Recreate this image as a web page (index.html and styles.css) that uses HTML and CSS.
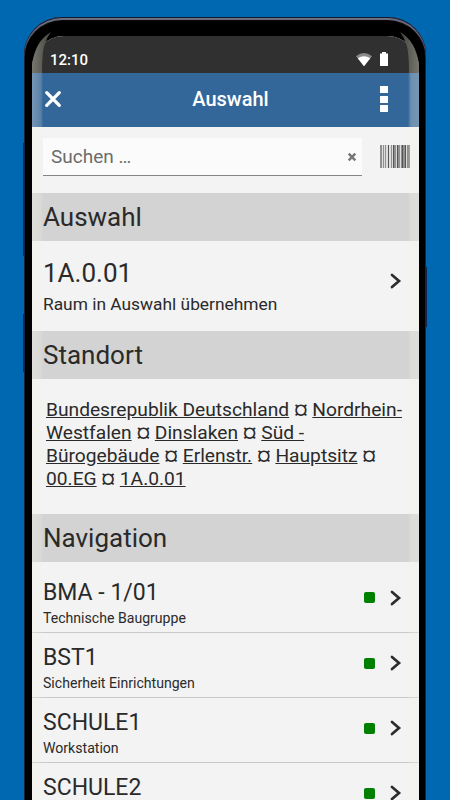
FILE: index.html
```
<!DOCTYPE html>
<html lang="de">
    <head>
        <meta charset="utf-8">
        <title>Auswahl</title>
        <link rel="stylesheet" href="styles.css">
    </head>
    <body>
        <div class="phone">
            <span class="button left upper"></span>
            <span class="button left lower"></span>
            <span class="button right"></span>
            <div class="screen">
                <div class="status">
                    <span class="time">12:10</span>
                    <svg class="wifi" width="18" height="15" viewBox="0 0 18 15">
                        <path d="M1 4.2Q9-2.2 17 4.2L9 14.2Z" fill="#8a8a8a"/>
                        <path d="M2.8 6.3Q9 2 15.2 6.3L9 14.2Z" fill="#fff"/>
                    </svg>
                    <svg class="battery" width="8" height="14" viewBox="0 0 8 14">
                        <path d="M2 0h4v1.5h2V14H0V1.5h2z" fill="#fff"/>
                    </svg>
                </div>
                <div class="header">
                    <svg class="close" width="18" height="18" viewBox="0 0 18 18">
                        <path d="M2.7 2.7L15.3 15.3M15.3 2.7L2.7 15.3" stroke="#fff" stroke-width="3.3" stroke-linecap="round"/>
                    </svg>
                    <h1>Auswahl</h1>
                    <div class="dots"><i></i><i></i><i></i></div>
                </div>
                <div class="search">
                    <div class="field">
                        <span>Suchen …</span>
                        <svg width="10" height="10" viewBox="0 0 10 10">
                            <path d="M1.7 1.7L8.3 8.3M8.3 1.7L1.7 8.3" stroke="#777" stroke-width="2.4"/>
                        </svg>
                    </div>
                    <svg class="barcode" width="30" height="23" viewBox="0 0 30 23">
                        <path d="M0 0h30v23H0z" fill="#ddd"/>
                        <path d="M0 0h2v23H0z M3 0h1v23H3z M5 0h1v23H5z M11 0h1v23h-1z M14 0h2v23h-2z M18 0h2v23h-2z M21 0h1v23h-1z M23 0h2v23h-2z M27 0h3v23h-3z" fill="#909090"/>
                        <path d="M8 0h1v23H8z M13 0h1v23h-1z M17 0h1v23h-1z M22 0h1v23h-1z M25 0h1v23h-1z" fill="#555"/>
                    </svg>
                </div>
                <h2>Auswahl</h2>
                <div class="row room">
                    <div class="label"><b>1A.0.01</b><small>Raum in Auswahl übernehmen</small></div>
                    <svg class="arrow" width="12" height="16" viewBox="0 0 12 16"><path d="M2 2L9 8L2 14"/></svg>
                </div>
                <h2>Standort</h2>
                <p class="path">
                    <a>Bundesrepublik Deutschland</a> ¤ <a>Nordrhein-<br>Westfalen</a> ¤ <a>Dinslaken</a> ¤ <a>Süd -<br>Bürogebäude</a> ¤ <a>Erlenstr.</a> ¤ <a>Hauptsitz</a> ¤<br><a>00.EG</a> ¤ <a>1A.0.01</a>
                </p>
                <h2>Navigation</h2>
                <div class="row">
                    <div class="label"><b>BMA - 1/01</b><small>Technische Baugruppe</small></div>
                    <i class="state"></i>
                    <svg class="arrow" width="12" height="16" viewBox="0 0 12 16"><path d="M2 2L9 8L2 14"/></svg>
                </div>
                <div class="row">
                    <div class="label"><b>BST1</b><small>Sicherheit Einrichtungen</small></div>
                    <i class="state"></i>
                    <svg class="arrow" width="12" height="16" viewBox="0 0 12 16"><path d="M2 2L9 8L2 14"/></svg>
                </div>
                <div class="row">
                    <div class="label"><b>SCHULE1</b><small>Workstation</small></div>
                    <i class="state"></i>
                    <svg class="arrow" width="12" height="16" viewBox="0 0 12 16"><path d="M2 2L9 8L2 14"/></svg>
                </div>
                <div class="row">
                    <div class="label"><b>SCHULE2</b></div>
                    <i class="state"></i>
                    <svg class="arrow" width="12" height="16" viewBox="0 0 12 16"><path d="M2 2L9 8L2 14"/></svg>
                </div>
            </div>
            <div class="glare"></div>
            <svg class="shine" width="387" height="41" viewBox="0 0 387 41">
                <defs>
                    <linearGradient id="edge" x1="0" y1="0" x2="1" y2="0">
                        <stop offset="0" stop-color="#77776f"/>
                        <stop offset="1" stop-color="#44443f"/>
                    </linearGradient>
                    <linearGradient id="edge2" x1="1" y1="0" x2="0" y2="0">
                        <stop offset="0" stop-color="#77776f"/>
                        <stop offset="1" stop-color="#44443f"/>
                    </linearGradient>
                </defs>
                <path d="M0 41V33Q3 9 19 0Q15 5 13 12Q10 18 10 41Z" fill="url(#edge)"/>
                <path d="M387 41V33Q384 9 368 0Q372 5 374 12Q377 18 377 41Z" fill="url(#edge2)"/>
            </svg>
        </div>
    </body>
</html>
```
FILE: styles.css
```
*{
    box-sizing: border-box;
}
body{
    display: flow-root;
    margin: 0;
    height: 800px;
    overflow: hidden;
    background-color: #0067b1;
    color: #2a2a2a;
    font-family: Roboto, sans-serif;
}
.phone{
    position: relative;
    width: 402px;
    height: 783px;
    margin: 17px 0 0 24px;
    padding: 19px 7px 0 8px;
    background-color: #000;
    border-radius: 38px 38px 0 0;
    box-shadow: inset 0 1px #10182e, inset 0 3px 1px #737486, inset 1px 0 #111a38, inset -1px 0 #111a38;
}
.button{
    position: absolute;
    width: 2px;
    background-color: #10284e;
}
.left{
    left: -1px;
}
.upper{
    top: 126px;
    height: 113px;
}
.lower{
    top: 297px;
    height: 58px;
}
.right{
    right: -1px;
    top: 250px;
    height: 60px;
}
.screen{
    height: 764px;
    overflow: hidden;
    background-color: #f3f3f3;
    border-radius: 32px 32px 0 0;
}
.status{
    display: flex;
    align-items: center;
    height: 37px;
    padding: 9px 31px 0 18px;
    background-color: #303030;
    color: #fff;
}
.time{
    flex: 1;
    padding-top: 1px;
    font-size: 15px;
    font-weight: 500;
}
.wifi{
    margin-right: 7px;
}
.header{
    display: flex;
    align-items: center;
    justify-content: space-between;
    height: 54px;
    padding: 0 31px 2px 12px;
    background-color: #336699;
    color: #fff;
}
h1{
    margin: 0 0 0 19px;
    font-size: 20px;
    font-weight: 500;
}
.dots i{
    display: block;
    width: 8px;
    height: 7px;
    margin: 0 0 2.5px;
    background-color: #fff;
}
.dots i:last-child{
    margin: 0;
}
.search{
    display: flex;
    height: 66px;
    padding: 11px 9px 0 11px;
}
.field{
    display: flex;
    align-items: center;
    justify-content: space-between;
    width: 319px;
    height: 38px;
    padding: 0 5px 0 8px;
    border-bottom: 1px solid #858585;
    background-color: #fbfbfb;
    color: #6c6c6c;
    font-size: 19px;
}
.barcode{
    margin: 7px 0 0 18px;
}
h2{
    height: 48px;
    margin: 0;
    padding-left: 11px;
    background-color: #d3d3d3;
    font-size: 26px;
    font-weight: 400;
    line-height: 48px;
}
.row{
    display: flex;
    align-items: center;
    height: 65px;
    padding: 0 17px 0 11px;
    border-bottom: 1px solid #c9c9c9;
}
h2 + .row{
    height: 71px;
    padding-top: 5px;
}
.label{
    flex: 1;
    height: 50px;
}
b, small{
    display: block;
    font-weight: 400;
}
b{
    font-size: 23px;
    line-height: 35px;
}
small{
    font-size: 14.1px;
    line-height: 17px;
}
.state{
    width: 11px;
    height: 11px;
    margin: 0 15px 4px 0;
    border-radius: 2px;
    background-color: #008000;
}
.arrow{
    margin-bottom: 4px;
}
.arrow path{
    fill: none;
    stroke: #2c2c2c;
    stroke-width: 2.7;
    stroke-linecap: round;
}
h2 + .room{
    height: 90px;
    padding-top: 0;
    border: none;
}
.room .label{
    height: 66px;
}
.room .arrow{
    margin-bottom: 10px;
}
.room b{
    font-size: 26px;
    line-height: 40px;
}
.room small{
    font-size: 17.35px;
    line-height: 22px;
}
.path{
    height: 135px;
    margin: 0;
    padding: 19px 0 0 14px;
    font-size: 19.2px;
    line-height: 23px;
    white-space: nowrap;
}
.path a{
    text-decoration: underline;
}
/* bright edges of the curved glass */
.glare{
    position: absolute;
    top: 56px;
    bottom: 0;
    left: 8px;
    right: 7px;
    background: linear-gradient(to right, rgba(240,240,230,.35), rgba(240,240,230,.2) 9px, transparent 11px, transparent 376px, rgba(240,240,230,.3) 379px, rgba(240,240,230,.35));
}
.shine{
    position: absolute;
    top: 15px;
    left: 8px;
}
```
